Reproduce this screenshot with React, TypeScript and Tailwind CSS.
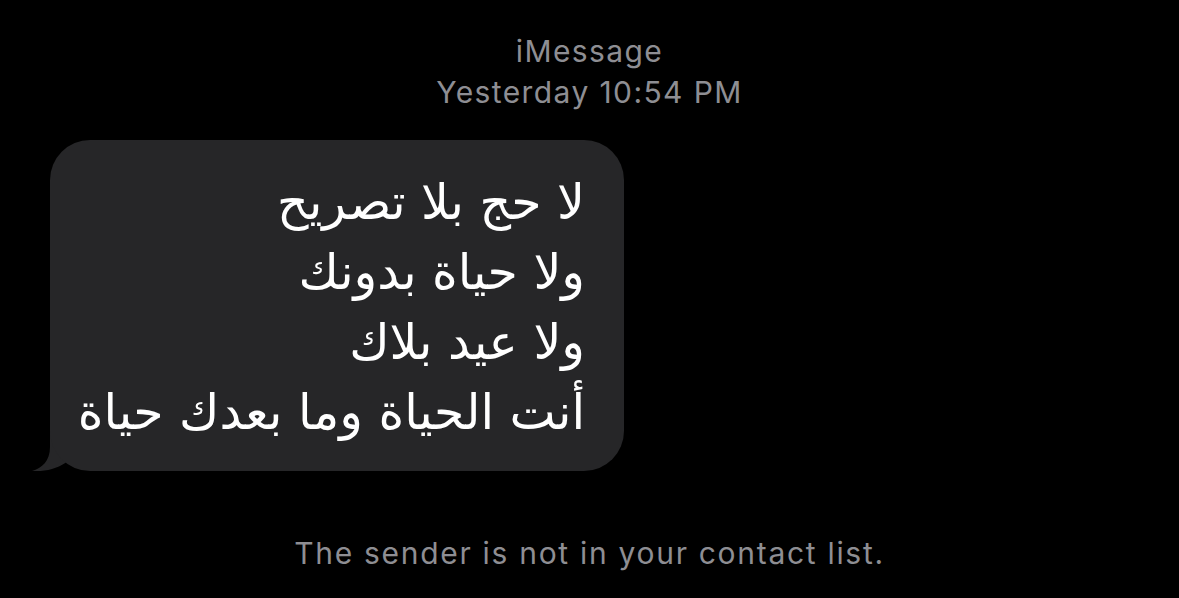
export default function App() {
  const lines = ['لا حج بلا تصريح', 'ولا حياة بدونك', 'ولا عيد بلاك', 'أنت الحياة وما بعدك حياة'];

  return (
    <div className="w-[1179px] h-[598px] bg-black overflow-hidden flex flex-col font-['Inter',sans-serif]">
      {/* Header */}
      <div className="flex flex-col items-center pt-[31px] text-[#8e8e93] text-[30px] leading-[41px] tracking-[1.4px]">
        <span>iMessage</span>
        <span>Yesterday 10:54 PM</span>
      </div>

      {/* Incoming bubble */}
      <div className="pl-[50px] pt-[27px]">
        <div className="relative w-[574px] h-[331px]">
          <svg className="absolute left-[-20px] bottom-0 w-[60px] h-[50px]" viewBox="0 0 60 50">
            <path d="M20 0 L20 26 C20 40 12 47 2 50 C16 51 29 47 38 40 L48 20 Z" fill="#262628" />
          </svg>
          <div
            dir="rtl"
            className="relative h-full rounded-[40px] bg-[#262628] pr-[39px] pt-[28px] text-white text-[49px] leading-[70px] font-['DejaVu_Sans',sans-serif]"
          >
            {lines.map((l) => (
              <div key={l}>{l}</div>
            ))}
          </div>
        </div>
      </div>

      {/* Footer */}
      <div className="flex justify-center pt-[60px] text-[#8e8e93] text-[30px] tracking-[1.7px]">
        The sender is not in your contact list.
      </div>
    </div>
  );
}
